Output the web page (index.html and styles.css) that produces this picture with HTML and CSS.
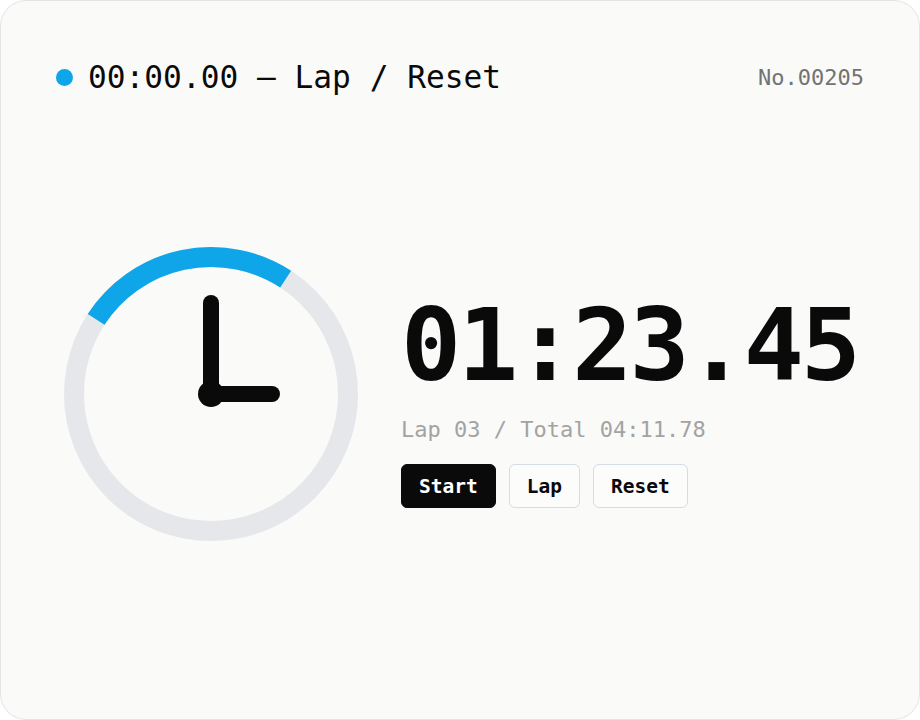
FILE: index.html
```html
<!DOCTYPE html>
<html lang="en">
<head>
<meta charset="utf-8">
<title>Stopwatch</title>
<link rel="stylesheet" href="styles.css">
</head>
<body>
<div class="card">
  <header class="head">
    <div class="title">
      <span class="dot"></span>
      <span class="title-text">00:00.00 — Lap / Reset</span>
    </div>
    <span class="serial">No.00205</span>
  </header>
  <main class="main">
    <svg class="clock" width="296" height="296" viewBox="0 0 296 296">
      <circle cx="148" cy="148" r="137" fill="none" stroke="#e5e7eb" stroke-width="20"/>
      <circle cx="148" cy="148" r="137" fill="none" stroke="#0ea5e9" stroke-width="20"
        stroke-dasharray="215.2 1000" transform="rotate(-147 148 148)"/>
      <line x1="148" y1="148" x2="148" y2="57" stroke="#0a0a0a" stroke-width="16" stroke-linecap="round"/>
      <line x1="148" y1="148" x2="209" y2="148" stroke="#0a0a0a" stroke-width="16" stroke-linecap="round"/>
      <circle cx="148" cy="148" r="13" fill="#0a0a0a"/>
    </svg>
    <section class="readout">
      <div class="time">01:23.45</div>
      <div class="lap">Lap 03 / Total 04:11.78</div>
      <div class="buttons">
        <button class="btn btn-primary">Start</button>
        <button class="btn">Lap</button>
        <button class="btn">Reset</button>
      </div>
    </section>
  </main>
</div>
</body>
</html>
```

FILE: styles.css
```css
* { box-sizing: border-box; }
html, body { margin: 0; padding: 0; background: #ffffff; }
body {
  font-family: "DejaVu Sans Mono", "Liberation Mono", monospace;
  color: #0a0a0a;
}
.card {
  width: 920px;
  height: 720px;
  background: #fafaf9;
  border: 1px solid #e4e4e7;
  border-radius: 26px;
  padding: 55px 55px;
}
.head {
  display: flex;
  align-items: center;
  justify-content: space-between;
  height: 42px;
}
.title {
  display: flex;
  align-items: center;
  gap: 15px;
}
.dot {
  width: 17px;
  height: 17px;
  border-radius: 50%;
  background: #0ea5e9;
}
.title-text {
  font-size: 31.2px;
  line-height: 42px;
  white-space: nowrap;
}
.serial {
  font-size: 22px;
  color: #737373;
}
.main {
  display: flex;
  align-items: flex-start;
  margin-top: 148px;
  padding-left: 7px;
  gap: 42px;
}
.clock { flex: none; display: block; }
.readout {
  margin-top: 50px;
  display: flex;
  flex-direction: column;
}
.time {
  font-size: 100px;
  line-height: 1;
  font-weight: bold;
  letter-spacing: -3.1px;
  margin-left: 0;
}
.lap {
  margin-top: 21px;
  font-size: 22px;
  line-height: 26px;
  color: #a3a3a3;
}
.buttons {
  margin-top: 21px;
  display: flex;
  gap: 13px;
}
.btn {
  font-family: "DejaVu Sans Mono", "Liberation Mono", monospace;
  font-weight: bold;
  font-size: 19.5px;
  height: 44px;
  padding: 0 17px;
  border-radius: 6px;
  border: 1px solid #d5dce6;
  background: #fcfcfb;
  color: #0a0a0a;
}
.btn-primary {
  background: #0a0a0a;
  border-color: #0a0a0a;
  color: #ffffff;
}
```
